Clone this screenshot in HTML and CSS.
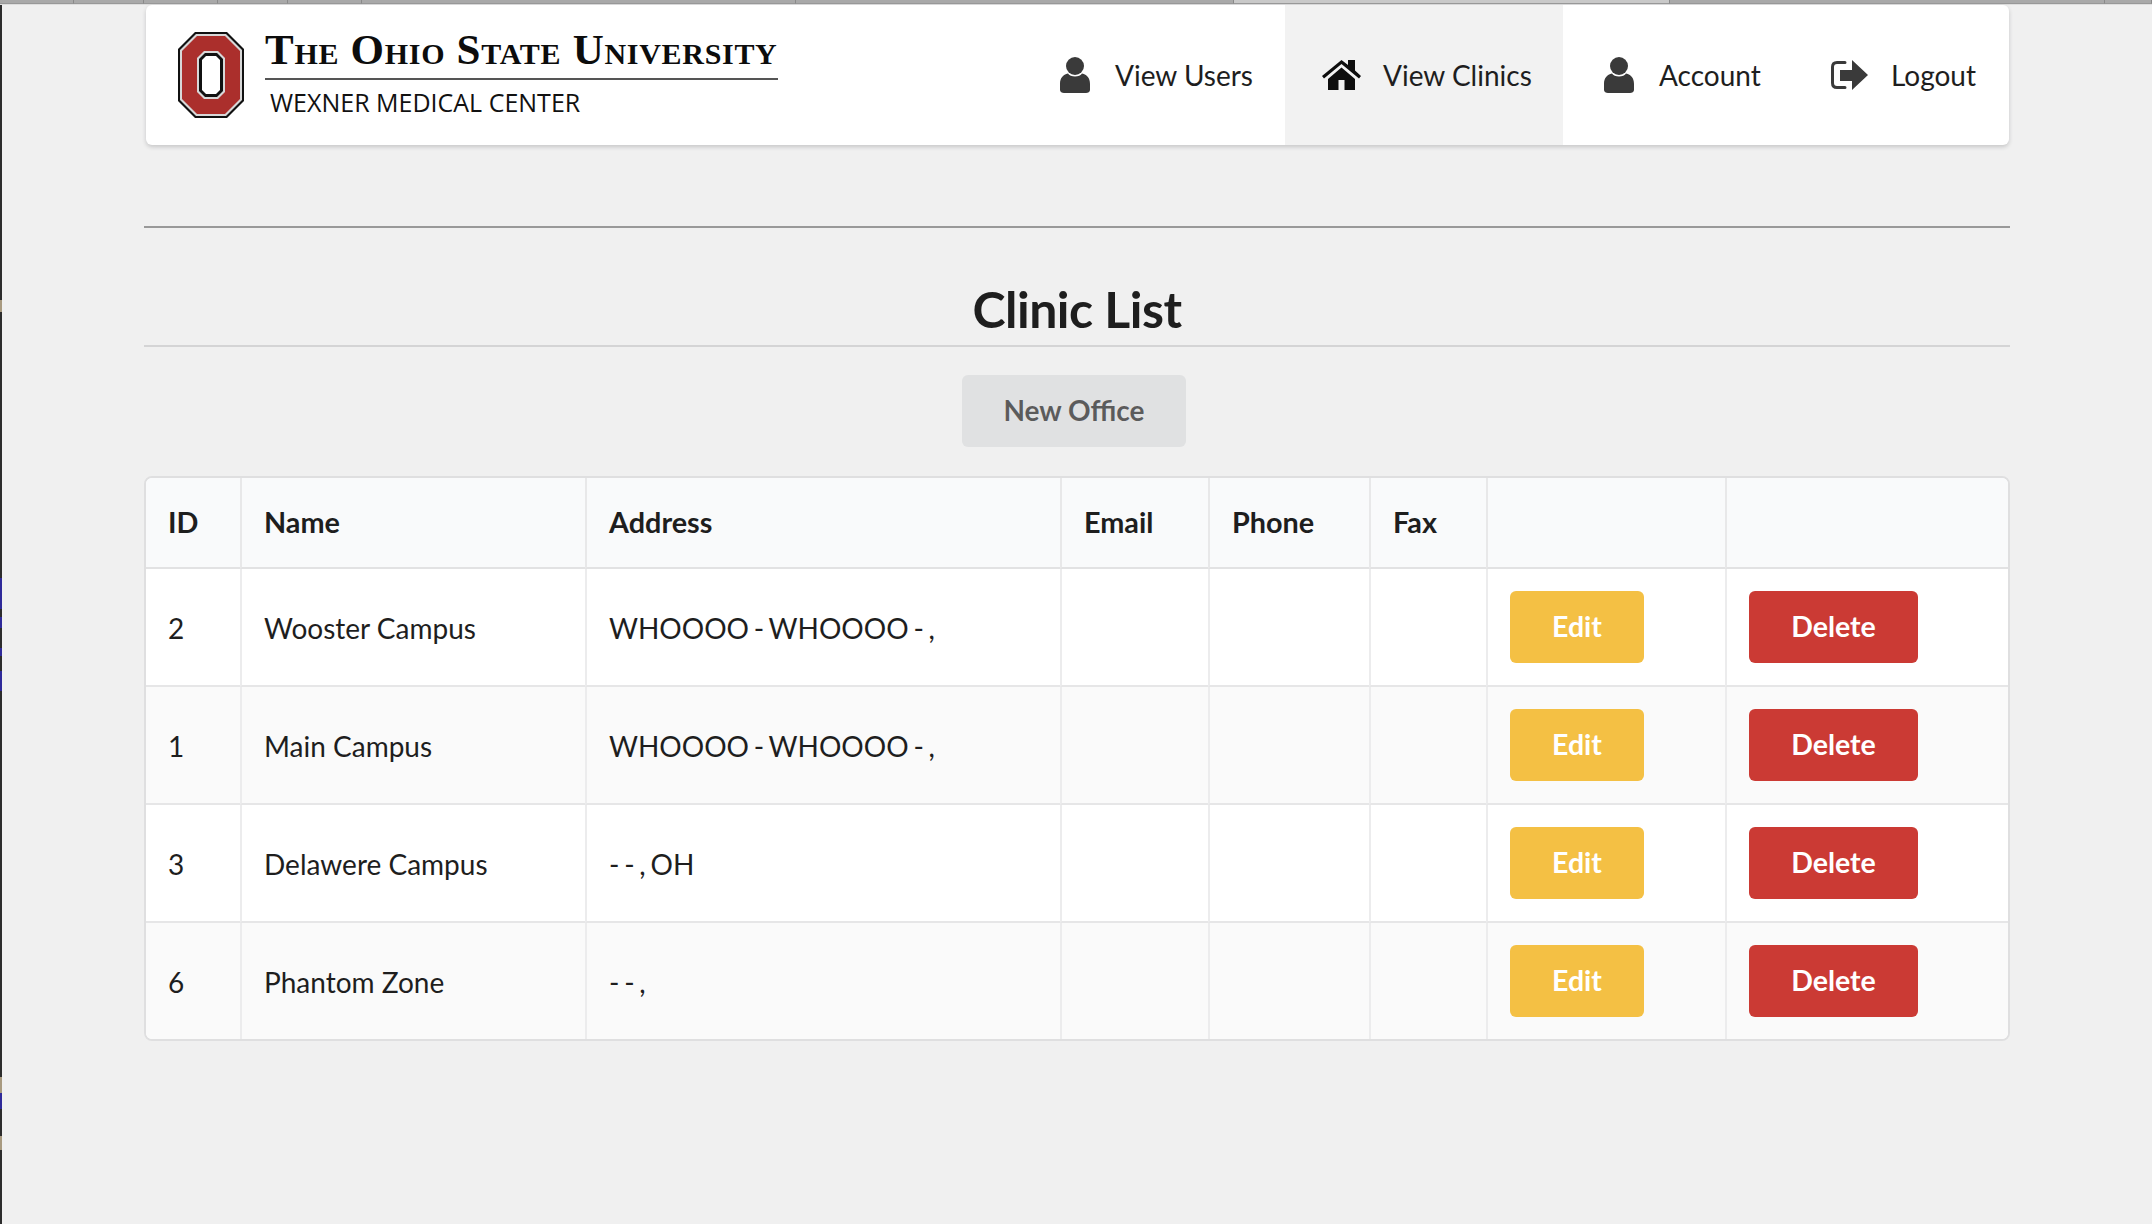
FILE: index.html
```html
<!DOCTYPE html>
<html lang="en">
<head>
<meta charset="utf-8">
<title>Clinic List</title>
<link rel="stylesheet" href="styles.css">
</head>
<body>
<div class="chrome-strip">
  <i></i><i></i><i></i><i></i><i></i><i></i><i></i><i class="tab-current"></i><i></i><i></i>
</div>
<div class="page">
  <header class="nav">
    <a class="brand" href="#">
      <svg class="brand-o" viewBox="0 0 66 86" aria-hidden="true">
        <path d="M17 0H49L66 17V69L49 86H17L0 69V17Z" fill="#111"/>
        <path d="M18 2H48L64 18V68L48 84H18L2 68V18Z" fill="#d8d8d8"/>
        <path d="M19 4H47L62 19V67L47 82H19L4 67V19Z" fill="#ab2f2c"/>
        <path d="M26 19H40L47 26V60L40 67H26L19 60V26Z" fill="#d8d8d8"/>
        <path d="M27 21H39L45 27V59L39 65H27L21 59V27Z" fill="#111"/>
        <path d="M28 24H38L42 28V58L38 62H28L24 58V28Z" fill="#fff"/>
      </svg>
      <span class="brand-text">
        <span class="brand-title">The Ohio State University</span>
        <span class="brand-sub">WEXNER MEDICAL CENTER</span>
      </span>
    </a>
    <nav class="menu">
      <a class="menu-item item-users" href="#">
        <svg class="icon" viewBox="0 0 30 36"><use href="#i-user"/></svg>View Users
      </a>
      <a class="menu-item item-clinics active" href="#">
        <svg class="icon icon-home" viewBox="0 0 39 30"><use href="#i-home"/></svg>View Clinics
      </a>
      <a class="menu-item item-account" href="#">
        <svg class="icon" viewBox="0 0 30 36"><use href="#i-user"/></svg>Account
      </a>
      <a class="menu-item item-logout" href="#">
        <svg class="icon icon-logout" viewBox="0 0 37 30"><use href="#i-logout"/></svg>Logout
      </a>
    </nav>
  </header>

  <hr class="rule">
  <h1 class="title">Clinic List</h1>

  <div class="actions"><button class="btn btn-grey">New Office</button></div>

  <table class="clinics">
    <thead>
      <tr><th>ID</th><th>Name</th><th>Address</th><th>Email</th><th>Phone</th><th>Fax</th><th></th><th></th></tr>
    </thead>
    <tbody>
      <tr><td>2</td><td>Wooster Campus</td><td class="addr">WHOOOO - WHOOOO - ,</td><td></td><td></td><td></td><td><button class="btn btn-edit">Edit</button></td><td><button class="btn btn-delete">Delete</button></td></tr>
      <tr><td>1</td><td>Main Campus</td><td class="addr">WHOOOO - WHOOOO - ,</td><td></td><td></td><td></td><td><button class="btn btn-edit">Edit</button></td><td><button class="btn btn-delete">Delete</button></td></tr>
      <tr><td>3</td><td>Delawere Campus</td><td class="addr">- - , OH</td><td></td><td></td><td></td><td><button class="btn btn-edit">Edit</button></td><td><button class="btn btn-delete">Delete</button></td></tr>
      <tr><td>6</td><td>Phantom Zone</td><td class="addr">- - ,</td><td></td><td></td><td></td><td><button class="btn btn-edit">Edit</button></td><td><button class="btn btn-delete">Delete</button></td></tr>
    </tbody>
  </table>
</div>

<svg class="sprite" aria-hidden="true">
  <symbol id="i-user" viewBox="0 0 30 36">
    <ellipse cx="15" cy="9" rx="9" ry="9" fill="currentColor"/>
    <path d="M8 16.500C10 20.500 20 20.500 22 16.500C27 17.500 30 21 30 27V33C30 35 28 36 26 36H4C2 36 0 35 0 33V27C0 21 3 17.500 8 16.500Z" fill="currentColor"/>
  </symbol>
  <symbol id="i-home" viewBox="0 0 39 30">
    <path d="M19.500 0L26 5V0H33V10.500L39 16L37 18.500L19.500 4L2 18.500L0 16Z" fill="currentColor"/>
    <path d="M19.500 7.500L33 19V30H22.500V20H16.500V30H6V19Z" fill="currentColor"/>
  </symbol>
  <symbol id="i-logout" viewBox="0 0 37 30">
    <path d="M14 2.500H6C3 2.500 1.500 4 1.500 7V23C1.500 26 3 27.500 6 27.500H14" fill="none" stroke="currentColor" stroke-width="3" stroke-linecap="round"/>
    <path d="M9 10H21V0L37 15L21 30V21H9Z" fill="currentColor"/>
  </symbol>
</svg>
</body>
</html>
```
FILE: styles.css
```css
* { box-sizing: border-box; }
html, body { margin: 0; padding: 0; }
body {
  background:
    linear-gradient(to bottom,
      #2c2c2c 0, #2c2c2c 300px, #a89a80 300px, #a89a80 312px,
      #2c2c2c 312px, #2c2c2c 578px, #2f2a9a 578px, #2f2a9a 609px,
      #2c2c2c 609px, #2c2c2c 617px, #2f2a9a 617px, #2f2a9a 628px,
      #2c2c2c 628px, #2c2c2c 648px, #2f2a9a 648px, #2f2a9a 656px,
      #2c2c2c 656px, #2c2c2c 671px, #2f2a9a 671px, #2f2a9a 691px,
      #2c2c2c 691px, #2c2c2c 1077px, #a89a80 1077px, #a89a80 1093px,
      #2f2a9a 1093px, #2f2a9a 1109px, #2c2c2c 1109px, #2c2c2c 1136px,
      #a89a80 1136px, #a89a80 1150px, #2c2c2c 1150px) 0 0 / 2px 100% no-repeat,
    #f0f0f0;
  color: #1e1e1e;
  font-family: Lato, "Liberation Sans", sans-serif;
  font-size: 28px;
  min-height: 1224px;
}
a { color: inherit; text-decoration: none; }
.sprite { display: none; }

.chrome-strip {
  display: grid;
  grid-template-columns: 74px 70px 74px 70px 74px 434px 438px 436px 435px 47px;
  height: 5px;
  border-bottom: 1px solid #dedede;
  background: #a9a9a9;
}
.chrome-strip i { border-right: 1px solid #8a8a8a; border-bottom: 1px solid #989898; }
.chrome-strip .tab-current { background: #c9c9c9; }

.page { width: 1866px; margin-left: 144px; }

.nav {
  display: flex;
  justify-content: space-between;
  height: 140px;
  margin: 0 1px 0 2px;
  background: #fff;
  border-radius: 6px;
  box-shadow: 0 2px 4px rgba(34,36,38,.2);
  overflow: hidden;
}
.brand { display: flex; align-items: flex-start; padding: 27px 0 0 32px; }
.brand-o { width: 66px; height: 86px; flex: none; }
.brand-text { display: flex; flex-direction: column; margin-left: 21px; width: 513px; }
.brand-title {
  font-family: "Liberation Serif", serif;
  font-weight: 700;
  font-variant: small-caps;
  font-size: 43px;
  line-height: 36px;
  letter-spacing: .7px;
  color: #0c0c0c;
  border-bottom: 2px solid #555;
  padding-bottom: 10px;
  white-space: nowrap;
}
.brand-sub {
  font-family: "Open Sans", sans-serif;
  font-size: 25px;
  line-height: 30px;
  color: #111;
  padding: 7px 0 0 5px;
  white-space: nowrap;
}

.menu { display: flex; }
.menu-item { display: flex; align-items: center; height: 100%; padding-bottom: 1px; white-space: nowrap; color: #1e1e1e; }
.item-users { width: 225px; }
.item-clinics { width: 278px; padding-left: 37px; }
.item-account { width: 222px; padding-left: 41px; }
.item-logout { width: 224px; padding-left: 46px; }
.active { background: #f2f2f2; }
.icon { width: 30px; height: 36px; margin-right: 25px; color: #3a3a3a; flex: none; }
.icon-home { width: 39px; height: 30px; margin-right: 22px; color: #0e0e0e; }
.icon-logout { width: 37px; height: 30px; margin-right: 23px; }

.rule { border: 0; height: 2px; background: #999; margin: 81px 0 0; }
.title {
  margin: 0;
  height: 119px;
  border-bottom: 2px solid #d4d4d5;
  font-size: 50px;
  font-weight: 700;
  line-height: 60px;
  letter-spacing: -.5px;
  padding-top: 51px;
  text-align: center;
  color: #1e1e1e;
}

.actions { display: flex; justify-content: center; padding: 28px 6px 29px 0; }

.btn {
  display: inline-block;
  vertical-align: top;
  height: 72px;
  border: 0;
  border-radius: 6px;
  font-family: Lato, sans-serif;
  font-size: 28.500px;
  font-weight: 700;
  padding: 0 0 2px;
}
.btn-grey { width: 224px; background: #e0e1e2; color: rgba(0,0,0,.6); font-size: 28px; }
.btn-edit { width: 134px; margin-top: -2px; background: #f4c044; color: #fff; }
.btn-delete { width: 169px; margin-top: -2px; background: #cb3a34; color: #fff; }

.clinics {
  width: 100%;
  table-layout: fixed;
  border-collapse: separate;
  border-spacing: 0;
  border: 2px solid #dfdfe0;
  border-radius: 8px;
  background: #fff;
}
.clinics th:nth-child(1) { width: 94px; }
.clinics th:nth-child(2) { width: 345px; }
.clinics th:nth-child(3) { width: 475px; }
.clinics th:nth-child(4) { width: 148px; }
.clinics th:nth-child(5) { width: 161px; }
.clinics th:nth-child(6) { width: 117px; }
.clinics th:nth-child(7) { width: 239px; }
.clinics th {
  height: 91px;
  background: #f9fafb;
  font-size: 28.800px;
  font-weight: 700;
  text-align: left;
  padding: 0 22px 1px;
  border-bottom: 2px solid #e2e2e3;
  border-left: 2px solid #e8e8e9;
}
.clinics td {
  height: 118px;
  padding: 2px 22px 0;
  border-bottom: 2px solid #e6e6e7;
  border-left: 2px solid #ececed;
}
.clinics .addr { word-spacing: -2.400px; }
.clinics th:first-child, .clinics td:first-child { border-left: 0; }
.clinics th:first-child { border-top-left-radius: 6px; }
.clinics th:last-child { border-top-right-radius: 6px; }
.clinics tbody tr:nth-child(even) td { background: #fafafa; }
.clinics tbody tr:last-child td { height: 116px; border-bottom: 0; }
.clinics tbody tr:last-child td:first-child { border-bottom-left-radius: 6px; }
.clinics tbody tr:last-child td:last-child { border-bottom-right-radius: 6px; }
```
